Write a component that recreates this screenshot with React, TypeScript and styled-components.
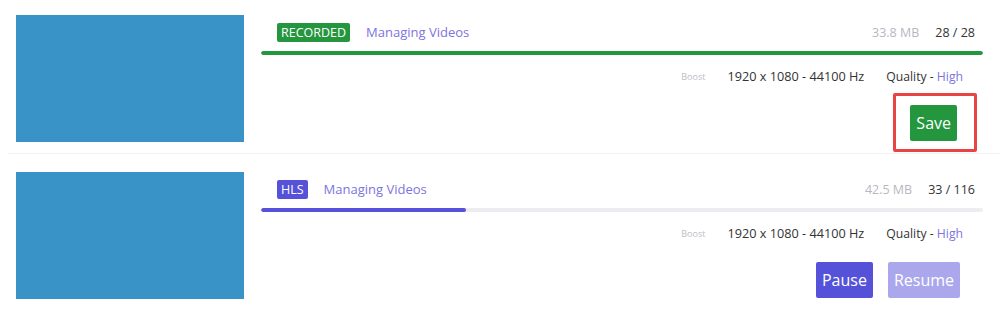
import React from 'react'
import styled, { createGlobalStyle } from 'styled-components'

const GlobalStyle = createGlobalStyle`
  body {
    margin: 0;
    background: #ffffff;
    font-family: 'Open Sans', 'Noto Sans', Arial, sans-serif;
    color: #333;
  }
`

interface Download {
  kind: 'RECORDED' | 'HLS'
  title: string
  size: string
  done: number
  total: number
  resolution: string
  quality: string
}

const downloads: Download[] = [
  { kind: 'RECORDED', title: 'Managing Videos', size: '33.8 MB', done: 28, total: 28, resolution: '1920 x 1080 - 44100 Hz', quality: 'High' },
  { kind: 'HLS', title: 'Managing Videos', size: '42.5 MB', done: 33, total: 116, resolution: '1920 x 1080 - 44100 Hz', quality: 'High' },
]

const palette = {
  RECORDED: { main: '#23963e', light: '#23963e' },
  HLS: { main: '#5552d9', light: '#aaa7ec' },
}

export default function App() {
  return (
    <>
      <GlobalStyle />
      <List>
        {downloads.map((d, i) => {
          const color = palette[d.kind].main
          return (
            <Item key={i} $first={i === 0}>
              <Thumb />
              <Panel>
                <Header>
                  <Badge $color={color}>{d.kind}</Badge>
                  <Title>{d.title}</Title>
                  <Size>{d.size}</Size>
                  <Count>
                    {d.done} / {d.total}
                  </Count>
                </Header>
                <Track>
                  <Fill $color={color} style={{ width: `${(d.done / d.total) * 100}%` }} />
                </Track>
                <Specs>
                  <Boost>Boost</Boost>
                  <Resolution>{d.resolution}</Resolution>
                  <Quality>
                    Quality - <em>{d.quality}</em>
                  </Quality>
                </Specs>
                <Actions>
                  {d.kind === 'RECORDED' ? (
                    <Highlight>
                      <Button $color={color}>Save</Button>
                    </Highlight>
                  ) : (
                    <>
                      <Button $color={palette.HLS.main}>Pause</Button>
                      <Button $color={palette.HLS.light} $muted>
                        Resume
                      </Button>
                    </>
                  )}
                </Actions>
              </Panel>
            </Item>
          )
        })}
      </List>
    </>
  )
}

const List = styled.div`
  display: flex;
  flex-direction: column;
  padding-left: 8px;
`

const Item = styled.div<{ $first: boolean }>`
  display: flex;
  gap: 17px;
  padding: ${(p) => (p.$first ? '15px' : '18px')} 17px 11px 8px;
  border-bottom: ${(p) => (p.$first ? '1px solid #f1f1f3' : 'none')};
`

const Thumb = styled.div`
  width: 228px;
  height: 127px;
  flex-shrink: 0;
  background: #3993c6;
`

const Panel = styled.div`
  flex: 1;
  display: flex;
  flex-direction: column;
`

const Header = styled.div`
  display: flex;
  align-items: center;
  height: 20px;
  margin-top: 7px;
  padding: 0 8px 0 16px;
`

const Badge = styled.span<{ $color: string }>`
  background: ${(p) => p.$color};
  color: #fff;
  font-size: 12.5px;
  line-height: 19px;
  padding: 0 4px;
  border-radius: 2px;
`

const Title = styled.span`
  margin-left: 16px;
  color: #7d74e0;
  font-size: 13px;
`

const Size = styled.span`
  margin-left: auto;
  color: #b7b7c2;
  font-size: 12.5px;
`

const Count = styled.span`
  margin-left: 16px;
  color: #333;
  font-size: 12.5px;
`

const Track = styled.div`
  margin-top: 9px;
  height: 4px;
  border-radius: 2px;
  background: #ececf1;
  overflow: hidden;
`

const Fill = styled.div<{ $color: string }>`
  height: 100%;
  border-radius: 2px;
  background: ${(p) => p.$color};
`

const Specs = styled.div`
  display: flex;
  align-items: center;
  justify-content: flex-end;
  height: 20px;
  margin-top: 11px;
  padding-right: 20px;
`

const Boost = styled.span`
  color: #bdbdc4;
  font-size: 9px;
  margin-right: 22px;
`

const Resolution = styled.span`
  font-size: 12.7px;
  color: #333;
  margin-right: 22px;
`

const Quality = styled.span`
  font-size: 12.2px;
  color: #333;

  em {
    font-style: normal;
    color: #7d74e0;
  }
`

const Actions = styled.div`
  display: flex;
  justify-content: flex-end;
  gap: 15px;
  margin-top: 19px;
  padding-right: 23px;
`

const Highlight = styled.div`
  position: relative;
  margin-right: 3px;

  &::after {
    content: '';
    position: absolute;
    top: -12px;
    bottom: -11px;
    left: -17px;
    right: -20px;
    border: 3px solid #e84444;
    border-radius: 2px;
    pointer-events: none;
  }
`

const Button = styled.button<{ $color: string; $muted?: boolean }>`
  height: 36px;
  padding: 0 6px;
  border: none;
  border-radius: 2px;
  background: ${(p) => p.$color};
  color: #fff;
  font-family: inherit;
  font-size: 16px;
  cursor: ${(p) => (p.$muted ? 'default' : 'pointer')};
`
